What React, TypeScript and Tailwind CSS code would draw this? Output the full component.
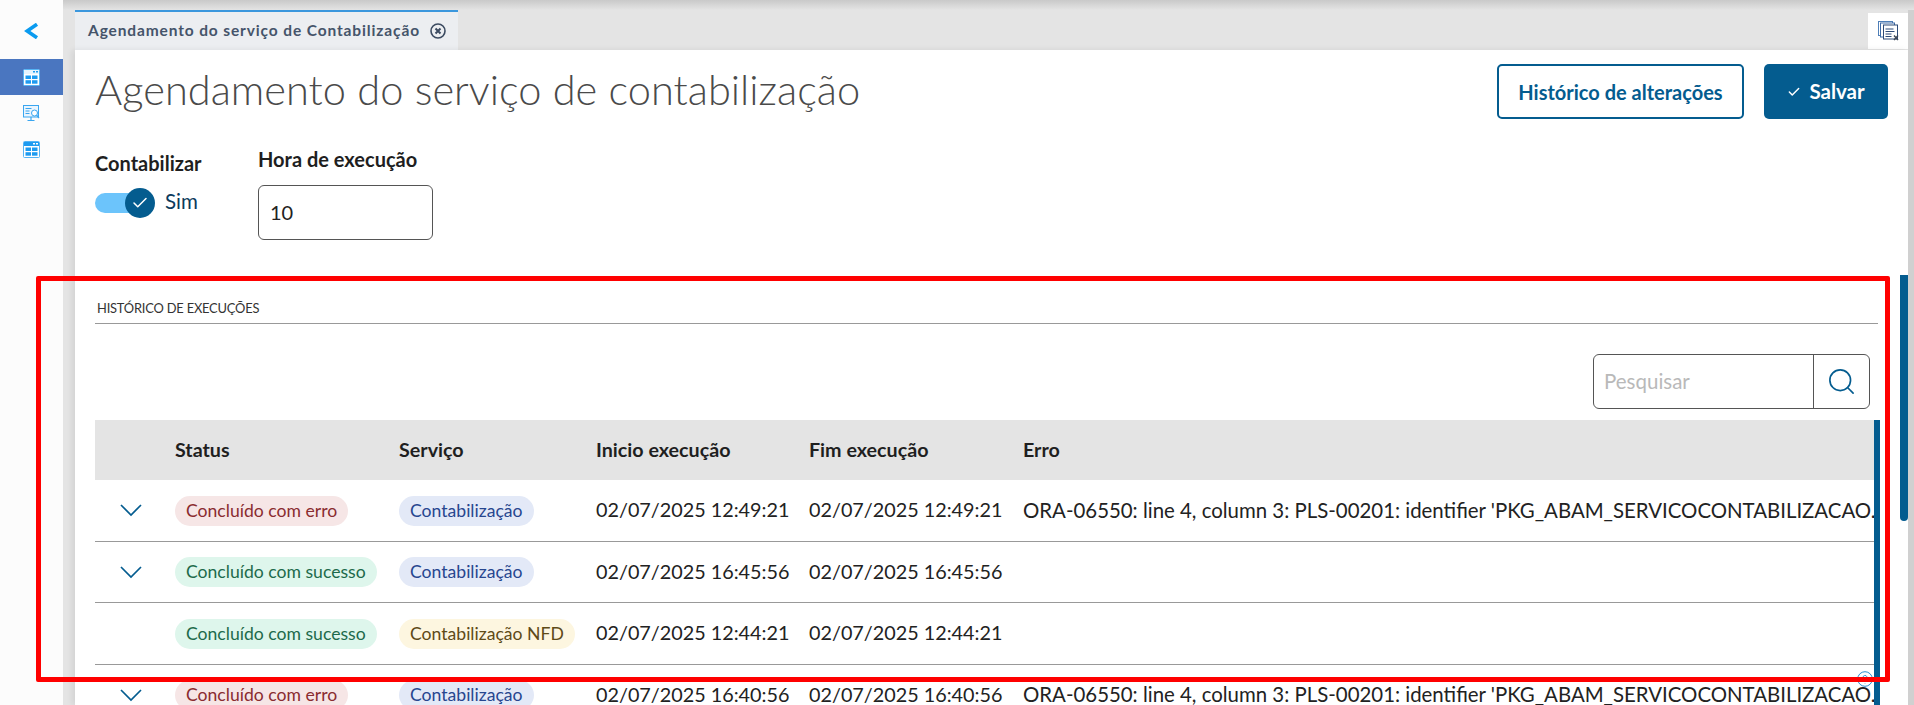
import { Check, Search } from "lucide-react";

const font = "font-['Lato','Liberation_Sans',sans-serif]";

type Row = {
  expandable: boolean;
  status: "erro" | "sucesso";
  service: "base" | "nfd";
  start: string;
  end: string;
  error?: string;
};

const oraError =
  "ORA-06550: line 4, column 3: PLS-00201: identifier 'PKG_ABAM_SERVICOCONTABILIZACAO.";

const rows: Row[] = [
  { expandable: true, status: "erro", service: "base", start: "02/07/2025 12:49:21", end: "02/07/2025 12:49:21", error: oraError },
  { expandable: true, status: "sucesso", service: "base", start: "02/07/2025 16:45:56", end: "02/07/2025 16:45:56" },
  { expandable: false, status: "sucesso", service: "nfd", start: "02/07/2025 12:44:21", end: "02/07/2025 12:44:21" },
  { expandable: true, status: "erro", service: "base", start: "02/07/2025 16:40:56", end: "02/07/2025 16:40:56", error: oraError },
];

function WindowIcon({ band, dots }: { band: string; dots: string }) {
  return (
    <svg width="17" height="17" viewBox="0 0 17 17">
      <rect x="0.5" y="0.5" width="16" height="16" rx="1" fill="#fff" stroke="#55b4f5" />
      <rect x="1" y="1" width="15" height="4" fill={band} />
      <rect x="10" y="2" width="2" height="1.5" fill={dots} />
      <rect x="13" y="2" width="2" height="1.5" fill={dots} />
      <rect x="2.5" y="6.5" width="5.5" height="3.5" fill="#1e9bf0" />
      <rect x="9" y="6.5" width="5.5" height="3.5" fill="#1e9bf0" />
      <rect x="2.5" y="11.2" width="5.5" height="3.5" fill="#1e9bf0" />
      <rect x="9" y="11.2" width="5.5" height="3.5" fill="#1e9bf0" />
    </svg>
  );
}

function MonitorIcon() {
  return (
    <svg width="17" height="17" viewBox="0 0 17 17" fill="none" stroke="#3aa6f0">
      <rect x="0.5" y="0.5" width="15" height="11.5" fill="#eaf5fe" />
      <path d="M2.5 3.5h6M2.5 6h4M2.5 8.5h4" strokeWidth="1.2" />
      <circle cx="11.5" cy="8" r="3" fill="#fff" />
      <path d="M13.6 10.2 16 13M8 12v3M4.5 15.5h7" strokeWidth="1.2" />
    </svg>
  );
}

function CloseTabsIcon() {
  return (
    <svg width="21" height="20" viewBox="0 0 21 20" fill="#fff" stroke="#2c4a78">
      <rect x="0.5" y="0.5" width="14" height="14" stroke="#4f7fb8" />
      <rect x="2.5" y="2" width="14" height="14" stroke="#3d6aa6" />
      <rect x="5.5" y="4" width="14" height="14" />
      <path d="M7.5 8h8M7.5 10.5h9M7.5 13h6M7.5 15.5h6" fill="none" />
      <path d="M16 14.5l4 4.5M20 14.5l-4 4.5" fill="none" stroke="#3c4654" strokeWidth="1.4" />
    </svg>
  );
}

function StatusPill({ status }: { status: Row["status"] }) {
  return status === "erro" ? (
    <span className="inline-flex h-[30px] items-center rounded-full bg-[#f6e6e6] px-[11px] text-[17.6px] text-[#8a2c30]">
      Concluído com erro
    </span>
  ) : (
    <span className="inline-flex h-[30px] items-center rounded-full bg-[#def6ec] px-[11px] text-[17.6px] text-[#1d6a4b]">
      Concluído com sucesso
    </span>
  );
}

function ServicePill({ service }: { service: Row["service"] }) {
  return service === "base" ? (
    <span className="inline-flex h-[30px] items-center rounded-full bg-[#e3e9f7] px-[11px] text-[17.6px] text-[#27468f]">
      Contabilização
    </span>
  ) : (
    <span className="inline-flex h-[30px] items-center rounded-full bg-[#fdf6e0] px-[11px] text-[17.6px] text-[#5e4a17]">
      Contabilização NFD
    </span>
  );
}

export default function App() {
  return (
    <div className={`${font} relative flex h-[705px] w-[1914px] overflow-hidden bg-[#e4e4e4]`}>
      {/* menu lateral */}
      <aside className="flex w-[63px] shrink-0 flex-col bg-[#fcfcfc]">
        <div className="flex h-[59px] items-start pl-[24px] pt-[23px]">
          <svg width="15" height="16" viewBox="0 0 15 16" fill="none" stroke="#0a9bf0" strokeWidth="3.6">
            <path d="M13 1.2 3.2 8 13 14.8" />
          </svg>
        </div>
        <div className="flex h-[36px] items-center justify-center bg-[#4a76c0]">
          <WindowIcon band="#e6f4fe" dots="#1e9bf0" />
        </div>
        <div className="flex h-[36px] items-center justify-center">
          <MonitorIcon />
        </div>
        <div className="flex h-[36px] items-center justify-center">
          <WindowIcon band="#1e9bf0" dots="#fff" />
        </div>
      </aside>

      <div className="ml-[12px] flex w-[1833px] shrink-0 flex-col">
        {/* abas */}
        <div className="flex h-[50px] shrink-0 items-end justify-between pt-[10px]">
          <div className="flex h-[40px] w-[383px] items-center gap-[10px] border-t-2 border-[#3b97dd] bg-[#eceef1] pl-[13px]">
            <span className="whitespace-nowrap text-[15.5px] font-bold tracking-[0.87px] text-[#45546a]">
              Agendamento do serviço de Contabilização
            </span>
            <svg width="16" height="16" viewBox="0 0 16 16" fill="none" stroke="#3b4a60">
              <circle cx="8" cy="8" r="7" strokeWidth="1.6" />
              <path d="M5.5 5.5l5 5M10.5 5.5l-5 5" strokeWidth="2" />
            </svg>
          </div>
          <div className="mb-[1px] flex h-[36px] w-[40px] items-center justify-center bg-white">
            <CloseTabsIcon />
          </div>
        </div>

        {/* conteudo */}
        <main className="flex min-h-0 flex-1 flex-col bg-white shadow-[-3px_0_6px_rgba(0,0,0,0.08)]">
          <header className="flex items-start justify-between pl-[20px] pr-[20px] pt-[14px]">
            <h1 className="text-[41.6px] font-light leading-[50px] text-[#4a4a4a]">
              Agendamento do serviço de contabilização
            </h1>
            <div className="flex gap-[20px]">
              <button className="h-[55px] w-[247px] rounded-[5px] border-2 border-[#045c8f] text-[20px] font-bold text-[#045c8f]">
                Histórico de alterações
              </button>
              <button className="flex h-[55px] w-[124px] items-center justify-center gap-[8px] rounded-[5px] bg-[#045c8f] text-[20.5px] font-bold text-white">
                <Check size={14} strokeWidth={2.5} />
                Salvar
              </button>
            </div>
          </header>

          <section className="mt-[28px] flex pl-[20px]">
            <div className="w-[163px] shrink-0 pt-[4px]">
              <label className="block text-[20px] font-bold leading-[24px] text-[#1f1f1f]">Contabilizar</label>
              <div className="mt-[15px] flex items-center gap-[10px]">
                <div className="relative h-[20px] w-[60px]">
                  <div className="h-[20px] w-[45px] rounded-full bg-[#6cc4fb]" />
                  <div className="absolute left-[30px] top-[-5px] flex h-[30px] w-[30px] items-center justify-center rounded-full bg-[#045c8f]">
                    <Check size={18} strokeWidth={2} className="text-white" />
                  </div>
                </div>
                <span className="-mt-[4px] text-[20.5px] text-[#0b3a5c]">Sim</span>
              </div>
            </div>
            <div>
              <label className="block text-[20px] font-bold leading-[24px] text-[#1f1f1f]">Hora de execução</label>
              <input
                readOnly
                value="10"
                className="mt-[14px] block h-[55px] w-[175px] rounded-[6px] border border-[#555] px-[11px] pb-[2px] text-[20px] text-[#222] outline-none"
              />
            </div>
          </section>

          {/* historico */}
          <section className="mt-[60px] pl-[20px]">
            <div className="mr-[30px] flex h-[24px] items-start border-b border-[#999] pl-[2px]">
              <span className="text-[12.9px] leading-[16px] tracking-[-0.2px] text-[#333]">HISTÓRICO DE EXECUÇÕES</span>
            </div>

            <div className="mr-[38px] mt-[30px] flex justify-end">
              <div className="flex h-[55px] w-[277px] rounded-[6px] border border-[#555]">
                <input
                  readOnly
                  placeholder="Pesquisar"
                  className="w-0 flex-1 bg-transparent px-[10px] text-[20.5px] outline-none placeholder:text-[#b9b9b9]"
                />
                <div className="flex w-[56px] items-center justify-center border-l border-[#555]">
                  <Search size={31} strokeWidth={1.3} className="text-[#045c8f]" />
                </div>
              </div>
            </div>

            <div className="mt-[11px] flex w-[1785px]">
              <div className="w-[1779px] shrink-0">
                <div className="flex h-[60px] items-center bg-[#e4e4e4] text-[19.7px] font-bold text-[#1f1f1f]">
                  <div className="w-[80px] shrink-0" />
                  <div className="w-[224px] shrink-0">Status</div>
                  <div className="w-[197px] shrink-0">Serviço</div>
                  <div className="w-[213px] shrink-0">Inicio execução</div>
                  <div className="w-[214px] shrink-0">Fim execução</div>
                  <div>Erro</div>
                </div>
                {rows.map((r) => (
                  <div
                    key={r.start}
                    className="flex h-[61.5px] items-center border-b border-[#999] text-[19.8px] text-[#222]"
                  >
                    <div className="flex w-[72px] shrink-0 justify-center">
                      {r.expandable && (
                        <svg width="24" height="14" viewBox="0 0 24 14" fill="none" stroke="#045c8f" strokeWidth="1.7">
                          <path d="M2 2l10 10L22 2" />
                        </svg>
                      )}
                    </div>
                    <div className="w-[8px] shrink-0" />
                    <div className="w-[224px] shrink-0">
                      <StatusPill status={r.status} />
                    </div>
                    <div className="w-[197px] shrink-0">
                      <ServicePill service={r.service} />
                    </div>
                    <div className="w-[213px] shrink-0">{r.start}</div>
                    <div className="w-[214px] shrink-0">{r.end}</div>
                    <div className="min-w-0 flex-1 overflow-hidden whitespace-nowrap text-[20.4px]">{r.error}</div>
                  </div>
                ))}
              </div>
              <div className="w-[6px] shrink-0 bg-[#045c8f]" />
            </div>
          </section>
        </main>
      </div>

      <div className="w-[6px] shrink-0 bg-[#d0d0d0]" />

      {/* sombra superior */}
      <div className="pointer-events-none absolute left-[63px] right-0 top-0 h-[10px] bg-gradient-to-b from-[#c9c9c9] to-[#e4e4e4]" />
      {/* barra de rolagem da pagina */}
      <div className="absolute left-[1900px] top-[275px] h-[246px] w-[8px] rounded-b-[4px] bg-[#045c8f]" />
      {/* ajuda */}
      <svg className="absolute left-[1857px] top-[671px]" width="16" height="16" viewBox="0 0 16 16" fill="none" stroke="#2a8fd0">
        <circle cx="8" cy="8" r="7.3" />
        <path d="M6 6.5a2 2 0 1 1 3 1.7c-.7.4-1 .8-1 1.6M8 12v.5" />
      </svg>
      {/* marcacao vermelha */}
      <div className="pointer-events-none absolute left-[36px] top-[276px] h-[406px] w-[1854px] rounded-[2px] border-[5px] border-[#ff0000]" />
    </div>
  );
}
